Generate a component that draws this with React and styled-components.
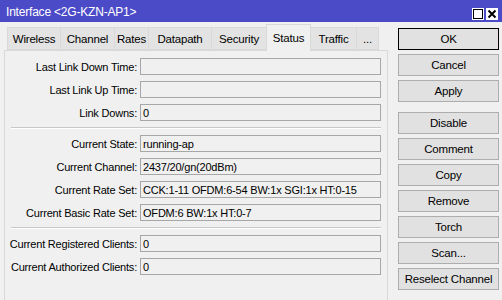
import React from "react";
import styled, { createGlobalStyle } from "styled-components";

const GlobalStyle = createGlobalStyle`
  html, body {
    margin: 0;
    padding: 0;
    background: #f0f0f0;
  }
  body {
    font-family: "Liberation Sans", Arial, sans-serif;
    font-size: 11px;
    letter-spacing: -0.2px;
    color: #000;
  }
`;

const Window = styled.div`
  width: 502px;
  height: 300px;
  overflow: hidden;
  background: #f0f0f0;
  display: flex;
  flex-direction: column;
`;

const TitleBar = styled.div`
  height: 22px;
  flex: none;
  background: #4b4bc8;
  display: flex;
  align-items: center;
  justify-content: space-between;
  padding: 0 4px 0 6px;
  color: #fff;
  font-size: 12px;
`;

const TitleText = styled.span`
  padding-top: 2px;
`;

const TitleButtons = styled.div`
  display: flex;
  gap: 2px;
  padding-top: 6px;
`;

const TitleButton = styled.div`
  width: 12px;
  height: 12px;
  background: #fff;
  display: flex;
  align-items: center;
  justify-content: center;
`;

const Body = styled.div`
  flex: 1;
  display: flex;
  padding-left: 4px;
  min-height: 0;
`;

const LeftColumn = styled.div`
  width: 384px;
  display: flex;
  flex-direction: column;
`;

const TabStrip = styled.div`
  height: 28px;
  display: flex;
  align-items: flex-end;
  padding-left: 4px;
  position: relative;
  z-index: 1;
`;

const Tab = styled.div`
  width: ${(p) => p.$width}px;
  height: ${(p) => (p.$active ? "27px" : "23px")};
  margin-bottom: ${(p) => (p.$active ? "-1px" : "0")};
  box-sizing: border-box;
  display: flex;
  align-items: center;
  justify-content: center;
  background: ${(p) => (p.$active ? "#f0f0f0" : "#e3e3e3")};
  border: 1px solid #d9d9d9;
  border-bottom: ${(p) => (p.$active ? "none" : "1px solid #d9d9d9")};
  margin-left: -1px;
  color: #000;
  font-size: 11.5px;
`;

const Panel = styled.div`
  flex: 1;
  border: 1px solid #d9d9d9;
  border-bottom: none;
  padding: 7px 6px 0 0;
  display: flex;
  flex-direction: column;
  gap: 6px;
`;

const Row = styled.div`
  display: flex;
  align-items: center;
  height: 17px;
`;

const Label = styled.div`
  width: 132px;
  padding-right: 3px;
  text-align: right;
  white-space: nowrap;
  flex: none;
`;

const Field = styled.div`
  flex: 1;
  height: 17px;
  box-sizing: border-box;
  border: 1px solid #a7a7a7;
  background: #f0f0f0;
  padding: 0 2px;
  display: flex;
  align-items: center;
  white-space: nowrap;
  overflow: hidden;
`;

const Separator = styled.div`
  height: 1px;
  margin-left: 6px;
  background: #c8c8c8;
  border-bottom: 1px solid #fff;
`;

const ButtonColumn = styled.div`
  width: 101px;
  margin-left: 10px;
  padding-top: 6px;
  display: flex;
  flex-direction: column;
  gap: 4px;
`;

const Button = styled.div`
  height: 22px;
  box-sizing: border-box;
  border: 1px solid ${(p) => (p.$default ? "#000" : "#adadad")};
  background: #e1e1e1;
  display: flex;
  align-items: center;
  justify-content: center;
  font-size: 11.5px;
  margin-top: ${(p) => (p.$spaced ? "6px" : "0")};
`;

const tabs = [
  ["Wireless", 54],
  ["Channel", 55],
  ["Rates", 35],
  ["Datapath", 64],
  ["Security", 56],
  ["Status", 45],
  ["Traffic", 47],
  ["...", 23],
];

const groups = [
  [
    ["Last Link Down Time:", ""],
    ["Last Link Up Time:", ""],
    ["Link Downs:", "0"],
  ],
  [
    ["Current State:", "running-ap"],
    ["Current Channel:", "2437/20/gn(20dBm)"],
    ["Current Rate Set:", "CCK:1-11 OFDM:6-54 BW:1x SGI:1x HT:0-15"],
    ["Current Basic Rate Set:", "OFDM:6 BW:1x HT:0-7"],
  ],
  [
    ["Current Registered Clients:", "0"],
    ["Current Authorized Clients:", "0"],
  ],
];

const buttons = [
  { text: "OK", def: true },
  { text: "Cancel" },
  { text: "Apply" },
  { text: "Disable", spaced: true },
  { text: "Comment" },
  { text: "Copy" },
  { text: "Remove" },
  { text: "Torch" },
  { text: "Scan..." },
  { text: "Reselect Channel" },
];

export default function App() {
  return (
    <>
      <GlobalStyle />
      <Window>
        <TitleBar>
          <TitleText>Interface &lt;2G-KZN-AP1&gt;</TitleText>
          <TitleButtons>
            <TitleButton>
              <svg width="10" height="10" viewBox="0 0 10 10">
                <rect x="0.5" y="0.5" width="9" height="9" fill="none" stroke="#000" strokeWidth="1" />
              </svg>
            </TitleButton>
            <TitleButton>
              <svg width="10" height="10" viewBox="0 0 10 10">
                <path d="M1.5 1.5 L8.5 8.5 M8.5 1.5 L1.5 8.5" stroke="#000" strokeWidth="2" />
              </svg>
            </TitleButton>
          </TitleButtons>
        </TitleBar>
        <Body>
          <LeftColumn>
            <TabStrip>
              {tabs.map(([t, w]) => (
                <Tab key={t} $active={t === "Status"} $width={w}>
                  {t}
                </Tab>
              ))}
            </TabStrip>
            <Panel>
              {groups.map((g, gi) => (
                <React.Fragment key={gi}>
                  {gi > 0 && <Separator />}
                  {g.map(([label, value]) => (
                    <Row key={label}>
                      <Label>{label}</Label>
                      <Field>{value}</Field>
                    </Row>
                  ))}
                </React.Fragment>
              ))}
            </Panel>
          </LeftColumn>
          <ButtonColumn>
            {buttons.map((b) => (
              <Button key={b.text} $default={b.def} $spaced={b.spaced}>
                {b.text}
              </Button>
            ))}
          </ButtonColumn>
        </Body>
      </Window>
    </>
  );
}
